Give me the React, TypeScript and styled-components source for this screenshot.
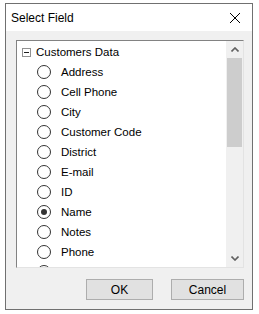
import styled, { createGlobalStyle } from 'styled-components';

const GlobalStyle = createGlobalStyle`
  html, body {
    margin: 0;
    padding: 0;
    background: #ffffff;
  }
  body {
    font-family: "Liberation Sans", Arial, sans-serif;
    font-size: 11.5px;
    color: #000;
  }
`;

const Window = styled.div`
  margin: 3px 0 0 5px;
  width: 246px;
  height: 305px;
  border: 1px solid #707070;
  display: flex;
  flex-direction: column;
  background: #f0f0f0;
`;

const TitleBar = styled.div`
  height: 27px;
  background: #ffffff;
  display: flex;
  align-items: center;
  justify-content: space-between;
  padding: 0 0 0 5px;
  font-size: 12px;
`;

const CloseButton = styled.div`
  width: 28px;
  height: 27px;
  display: flex;
  align-items: center;
  justify-content: center;
  margin-right: 3px;
`;

const Body = styled.div`
  flex: 1;
  display: flex;
  flex-direction: column;
  padding: 9px 8px 0 10px;
`;

const TreeBox = styled.div`
  height: 226px;
  border-top: 1px solid #828282;
  border-left: 1px solid #828282;
  border-right: 1px solid #e3e3e3;
  border-bottom: 1px solid #e3e3e3;
  background: #ffffff;
  display: flex;
  overflow: hidden;
`;

const List = styled.div`
  flex: 1;
  padding-top: 1px;
  overflow: hidden;
`;

const Row = styled.div<{ $level: number }>`
  height: 20px;
  flex-shrink: 0;
  display: flex;
  align-items: center;
  padding-left: ${p => (p.$level === 0 ? 5 : 20)}px;
  gap: ${p => (p.$level === 0 ? 5 : 10)}px;
  white-space: nowrap;
`;

const Expander = styled.div`
  width: 7px;
  height: 7px;
  border: 1px solid #919191;
  position: relative;
  &::after {
    content: '';
    position: absolute;
    left: 1px;
    top: 3px;
    width: 5px;
    height: 1px;
    background: #1f1f1f;
  }
`;

const Radio = styled.div<{ $checked?: boolean }>`
  width: 12px;
  height: 12px;
  border-radius: 50%;
  border: 1px solid #333333;
  background: #ffffff;
  display: flex;
  align-items: center;
  justify-content: center;
  &::after {
    content: '';
    width: 6px;
    height: 6px;
    border-radius: 50%;
    background: ${p => (p.$checked ? '#333333' : 'transparent')};
  }
`;

const ScrollBar = styled.div`
  width: 17px;
  background: #f0f0f0;
  display: flex;
  flex-direction: column;
`;

const ScrollArrow = styled.div`
  height: 17px;
  display: flex;
  align-items: center;
  justify-content: center;
`;

const Track = styled.div`
  flex: 1;
  display: flex;
  flex-direction: column;
`;

const Thumb = styled.div`
  height: 89px;
  margin: 0 1px;
  background: #cdcdcd;
`;

const Footer = styled.div`
  display: flex;
  justify-content: flex-end;
  gap: 18px;
  padding-top: 11px;
`;

const Button = styled.button<{ $w: number }>`
  width: ${p => p.$w}px;
  height: 21px;
  background: #e1e1e1;
  border: 1px solid #adadad;
  font-family: "Liberation Sans", Arial, sans-serif;
  font-size: 12px;
  color: #000;
  padding: 0;
`;

const fields = [
  'Address',
  'Cell Phone',
  'City',
  'Customer Code',
  'District',
  'E-mail',
  'ID',
  'Name',
  'Notes',
  'Phone',
];

const Chevron = ({ up }: { up?: boolean }) => (
  <svg width="8" height="5" viewBox="0 0 8 5">
    <path
      d={up ? 'M0.5 4.5 L4 1 L7.5 4.5' : 'M0.5 0.5 L4 4 L7.5 0.5'}
      fill="none"
      stroke="#606060"
      strokeWidth="1.6"
    />
  </svg>
);

export default function App() {
  return (
    <>
      <GlobalStyle />
      <Window>
        <TitleBar>
          <span>Select Field</span>
          <CloseButton>
            <svg width="12" height="12" viewBox="0 0 12 12">
              <path d="M1 1 L11 11 M11 1 L1 11" stroke="#000" strokeWidth="1" />
            </svg>
          </CloseButton>
        </TitleBar>
        <Body>
          <TreeBox>
            <List>
              <Row $level={0}>
                <Expander />
                <span>Customers Data</span>
              </Row>
              {fields.map(f => (
                <Row $level={1} key={f}>
                  <Radio $checked={f === 'Name'} />
                  <span>{f}</span>
                </Row>
              ))}
              <Row $level={1}>
                <Radio />
              </Row>
            </List>
            <ScrollBar>
              <ScrollArrow>
                <Chevron up />
              </ScrollArrow>
              <Track>
                <Thumb />
              </Track>
              <ScrollArrow>
                <Chevron />
              </ScrollArrow>
            </ScrollBar>
          </TreeBox>
          <Footer>
            <Button $w={67}>OK</Button>
            <Button $w={73}>Cancel</Button>
          </Footer>
        </Body>
      </Window>
    </>
  );
}
